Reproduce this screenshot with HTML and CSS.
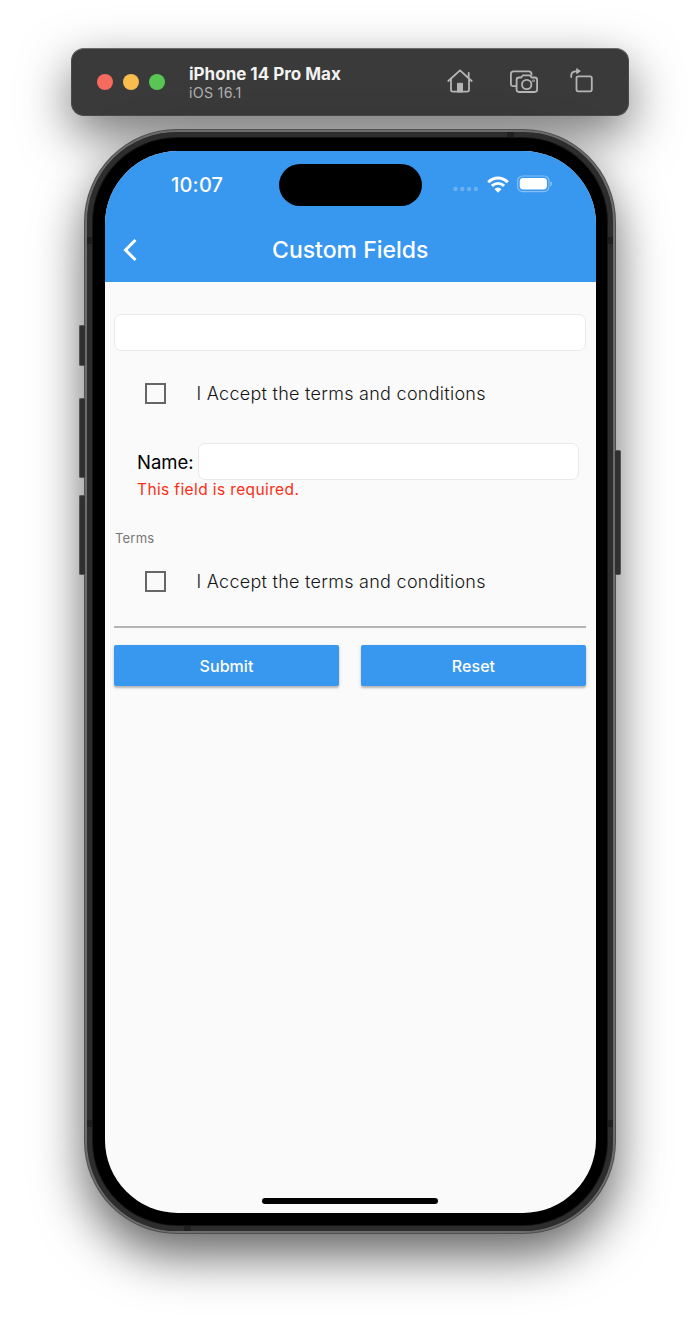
FILE: index.html
```html
<!DOCTYPE html>
<html lang="en">
<head>
<meta charset="utf-8">
<title>Custom Fields</title>
<link rel="stylesheet" href="styles.css">
</head>
<body>
<header class="toolbar">
  <div class="lights"><i class="light red"></i><i class="light yellow"></i><i class="light green"></i></div>
  <div class="device-name"><strong>iPhone 14 Pro Max</strong><span>iOS 16.1</span></div>
  <div class="tools">
    <svg width="26" height="26" viewBox="0 0 26 26" fill="none" stroke="#b5b5b5" stroke-width="1.8" stroke-linecap="round" stroke-linejoin="round"><path d="M1.300 13 13 2.300 24.700 13M4 11v10.800q0 1.800 1.800 1.800h14.400q1.800 0 1.800-1.800V11M21.700 9.500V5"/><path d="M10.500 23.600v-8.300h5v8.300z" fill="#b5b5b5" stroke-width="1"/></svg>
    <svg width="28" height="26" viewBox="0 0 28 26" fill="none" stroke="#b5b5b5" stroke-width="1.800" stroke-linejoin="round" stroke-linecap="round"><path d="M6 18.200H3.600q-2.700 0-2.700-2.700V6q0-2.700 2.700-2.700h15.200q2.700 0 2.700 2.700v.8"/><path d="M9 9.500h2.200l1.700-2.200h7l1.700 2.200h3.100q2.400 0 2.400 2.400v9.700q0 2.400-2.400 2.400H9q-2.400 0-2.400-2.400v-9.700Q6.600 9.500 9 9.500z"/><circle cx="16.700" cy="16.500" r="4.700"/><circle cx="23.500" cy="12.800" r=".4"/></svg>
    <svg width="24" height="26" viewBox="0 0 24 26" fill="none" stroke="#b5b5b5" stroke-width="1.8" stroke-linecap="round" stroke-linejoin="round"><rect x="6.500" y="8.300" width="15.300" height="15" rx="1.800"/><path d="M1.200 9V7.800Q1.200 3.300 6 3.300h1.500"/><path d="M6.700 1v4.600L10 3.300z" fill="#b5b5b5" stroke-width="1"/></svg>
  </div>
</header>

<main class="phone">
  <i class="key mute"></i><i class="key up"></i><i class="key down"></i><i class="key power"></i>
  <i class="seam seam-top"></i><i class="seam seam-bottom"></i><i class="seam seam-l1"></i><i class="seam seam-r1"></i><i class="seam seam-l2"></i><i class="seam seam-r2"></i>
  <div class="screen">
    <div class="top">
      <div class="status">
        <time>10:07</time>
        <div class="island"></div>
        <div class="indicators">
          <svg width="26" height="6" viewBox="0 0 26 6" fill="#fff" fill-opacity=".25"><circle cx="2.500" cy="3" r="2.200"/><circle cx="9.300" cy="3" r="2.200"/><circle cx="16.100" cy="3" r="2.200"/><circle cx="22.900" cy="3" r="2.200"/></svg>
          <svg class="wifi" width="22" height="17" viewBox="0 0 22 17" fill="none" stroke="#fff" stroke-width="2.900"><path d="M1.200 6.200Q5.500 2 11 2t9.800 4.200M4.900 9.900Q7.500 7.400 11 7.400t6.100 2.500"/><path d="M7.400 13Q11 9.900 14.600 13L11 16.700z" fill="#fff" stroke="none"/></svg>
          <svg width="36" height="18" viewBox="0 0 36 18"><rect x=".6" y="1" width="31.400" height="15.600" rx="5" fill="none" stroke="#fff" stroke-opacity=".4" stroke-width="1.200"/><rect x="2.700" y="3.100" width="27.200" height="11.400" rx="3.400" fill="#fff"/><path d="M33.300 6.200q1.800.9 1.800 2.600t-1.800 2.600z" fill="#fff" fill-opacity=".45"/></svg>
        </div>
      </div>
      <div class="navbar">
        <svg class="back" width="16" height="24" viewBox="0 0 16 24" fill="none" stroke="#fff" stroke-width="3"><path d="M13.500 2 3.500 12l10 10"/></svg>
        <h1>Custom Fields</h1>
      </div>
    </div>
    <form class="form">
      <div class="field"></div>
      <label class="check first"><i class="box"></i><span>I Accept the terms and conditions</span></label>
      <div class="name-row"><span>Name:</span><div class="field"></div></div>
      <p class="error">This field is required.</p>
      <p class="caption">Terms</p>
      <label class="check second"><i class="box"></i><span>I Accept the terms and conditions</span></label>
      <hr>
      <div class="actions"><button type="button">Submit</button><button type="button">Reset</button></div>
    </form>
    <div class="home"></div>
  </div>
</main>
</body>
</html>
```
FILE: styles.css
```css
* { box-sizing: border-box; }
body {
  margin: 0;
  height: 1331px;
  padding-top: 48px;
  display: flex;
  flex-direction: column;
  align-items: center;
  overflow: hidden;
  background: #fff;
  font-family: Inter, "Liberation Sans", sans-serif;
}
.toolbar {
  width: 558px;
  height: 68px;
  flex: none;
  display: flex;
  align-items: center;
  padding: 0 34px 0 25px;
  border-radius: 13px;
  background: #3a3a3a;
  border: 1px solid #4a4a4a;
  border-top-color: #6b6b6b;
  box-shadow: 0 18px 50px rgba(0, 0, 0, .55);
}
.lights { display: flex; gap: 10px; width: 92px; }
.light { width: 16px; height: 16px; border-radius: 50%; }
.red { background: #f76b5f; }
.yellow { background: #f9bd4e; }
.green { background: #58c554; }
.device-name { display: flex; flex-direction: column; flex: 1; }
.device-name strong { font-size: 17px; line-height: 20px; font-weight: 700; letter-spacing: 0; color: #f2f2f2; }
.device-name span { font-size: 14.3px; line-height: 17px; letter-spacing: .25px; color: #b0b0b0; }
.tools { display: flex; gap: 37px; align-items: center; }
.tools svg { position: relative; top: -1px; left: -.5px; }
.tools svg:last-child { margin-left: -5px; }

.phone {
  position: relative;
  flex: none;
  width: 530px;
  height: 1103px;
  margin-top: 14px;
  padding: 19px 18px 18px;
  border: 2px solid #6c6c6c;
  border-radius: 92px;
  background: #000;
  box-shadow: inset 0 0 0 5px #2d2d2d, inset 0 0 0 6px #151515, 0 0 0 1px #505050, 0 22px 50px rgba(0, 0, 0, .62);
}
.screen {
  display: flex;
  flex-direction: column;
  width: 490.5px;
  height: 1062px;
  border-radius: 73px;
  overflow: hidden;
  background: #fafafa;
}
.key { position: absolute; width: 6px; background: #303030; border: 1px solid #555; border-right: 0; border-radius: 2px 0 0 2px; left: -8px; }
.mute { top: 193px; height: 41px; }
.up { top: 266px; height: 80px; }
.down { top: 363px; height: 80px; }
.power { left: auto; right: -8px; top: 318px; height: 125px; border-right: 1px solid #555; border-left: 0; border-radius: 0 2px 2px 0; }
.seam { position: absolute; background: #1f1f1f; width: 5px; height: 7px; }
.seam-top { width: 7px; height: 5px; top: 0; left: 420px; }
.seam-bottom { width: 7px; height: 5px; bottom: 0; left: 97px; }
.seam-l1 { left: 0; top: 105px; }
.seam-r1 { right: 0; top: 105px; }
.seam-l2 { left: 0; bottom: 104px; }
.seam-r2 { right: 0; bottom: 104px; }

.top { height: 131px; flex: none; background: #3897ee; color: #fff; }
.status { height: 67px; display: grid; grid-template-columns: 174px 143px 1fr; align-items: center; }
.status time { padding-left: 66px; font-size: 20px; line-height: 24px; font-weight: 500; letter-spacing: .2px; }
.island { height: 42px; border-radius: 21px; background: #000; }
.indicators { display: flex; align-items: center; padding-left: 31px; margin-top: -1px; }
.indicators svg:first-child { margin-top: 10px; }
.wifi { margin: 0 8.500px 0 7.500px; }
.navbar { height: 64px; display: grid; grid-template-columns: 50px 1fr 50px; align-items: center; }
.back { margin-left: 17px; }
h1 { margin: 0; text-align: center; font-size: 23px; line-height: 28px; font-weight: 500; letter-spacing: 0; }

.form { padding: 32px 9.5px 0 9px; flex: 1; color: #161616; }
.form p { margin: 0; }
.field { height: 37px; border: 1px solid #e9e9e9; border-radius: 7px; background: #fff; }
.check { display: flex; align-items: center; gap: 30.5px; height: 26px; padding-left: 31px; font-size: 18px; font-weight: 350; letter-spacing: .27px; }
.box { width: 21px; height: 21px; border: 2px solid #666; }
.first { margin-top: 29px; }
.name-row { display: grid; grid-template-columns: 61px 1fr; align-items: center; margin-top: 37px; padding: 0 7px 0 23px; font-size: 18.5px; color: #000; }
.error { padding-left: 23px; font-size: 15.5px; line-height: 20px; letter-spacing: .38px; color: #f92f15; }
.caption { padding: 29px 0 0 1px; font-size: 13px; line-height: 19px; color: #777; letter-spacing: .2px; }
.second { margin-top: 20px; }
hr { height: 1.5px; border: 0; margin: 32px 0 17.500px; background: #b4b4b4; }
.actions { display: grid; grid-template-columns: 1fr 1fr; gap: 22px; }
.actions button { height: 41px; padding: 0; border: 0; border-radius: 2px; background: #3897ee; color: #fff; font: 500 16px/20px Inter, "Liberation Sans", sans-serif; letter-spacing: .05px; box-shadow: 0 2px 2px rgba(0, 0, 0, .22), 0 1px 4px rgba(0, 0, 0, .1); }
.home { width: 176px; height: 6px; margin: 0 auto 9px; border-radius: 3px; background: #000; }
```
